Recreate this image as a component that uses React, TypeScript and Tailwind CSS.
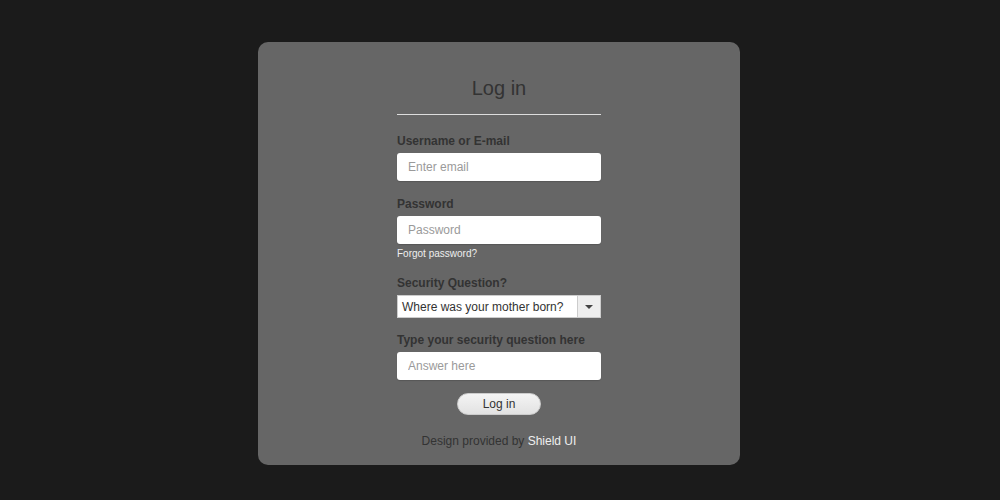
import { useState } from "react";

const App = () => {
  const [email, setEmail] = useState("");
  const [password, setPassword] = useState("");
  const [answer, setAnswer] = useState("");

  const labelClass = "block text-[12px] leading-4 font-bold text-[#333]";
  const inputClass =
    "block w-full h-[28px] mt-[4px] px-[11px] bg-white rounded-[3px] text-[12px] text-[#333] placeholder:text-[#9a9a9a] outline-none shadow-[0_1px_1px_rgba(0,0,0,0.15)]";

  return (
    <div
      className="min-h-[500px] w-full bg-[#1b1b1b] pt-[42px] pr-[2px]"
      style={{ fontFamily: '"Liberation Sans", Arial, sans-serif' }}
    >
      <div className="mx-auto w-[482px] h-[423px] rounded-[10px] bg-[#666] pt-[32px]">
        <div className="mx-auto w-[204px]">
          <h1 className="text-center text-[20px] leading-7 text-[#333]">
            Log in
          </h1>
          <div className="mt-[12px] h-[1px] bg-[#ddd]" />

          <label className={`${labelClass} mt-[18px]`}>Username or E-mail</label>
          <input
            className={inputClass}
            placeholder="Enter email"
            value={email}
            onChange={(e) => setEmail(e.target.value)}
          />

          <label className={`${labelClass} mt-[15px]`}>Password</label>
          <input
            type="password"
            className={inputClass}
            placeholder="Password"
            value={password}
            onChange={(e) => setPassword(e.target.value)}
          />
          <a className="block mt-[3px] text-[10px] leading-[14px] text-[#eee]">
            Forgot password?
          </a>

          <label className={`${labelClass} mt-[14px]`}>Security Question?</label>
          <div className="mt-[4px] flex h-[23px] bg-white border border-[#ccc]">
            <span className="flex-1 whitespace-nowrap pl-[4px] pt-[1px] text-[12px] leading-[21px] text-[#333]">
              Where was your mother born?
            </span>
            <span className="flex w-[23px] items-center justify-center border-l border-[#ccc] bg-[#eee]">
              <span className="h-0 w-0 border-x-[4px] border-t-[4px] border-x-transparent border-t-[#444]" />
            </span>
          </div>

          <label className={`${labelClass} mt-[14px]`}>
            Type your security question here
          </label>
          <input
            className={inputClass}
            placeholder="Answer here"
            value={answer}
            onChange={(e) => setAnswer(e.target.value)}
          />

          <div className="mt-[13px] flex justify-center">
            <button className="h-[22px] w-[84px] rounded-full border border-[#ccc] bg-gradient-to-b from-[#f4f4f4] to-[#e2e2e2] text-[12px] text-[#333]">
              Log in
            </button>
          </div>
        </div>

        <p className="mt-[18px] text-center text-[12px] leading-4 text-[#333]">
          Design provided by <span className="text-[#eee]">Shield UI</span>
        </p>
      </div>
    </div>
  );
};

export default App;
